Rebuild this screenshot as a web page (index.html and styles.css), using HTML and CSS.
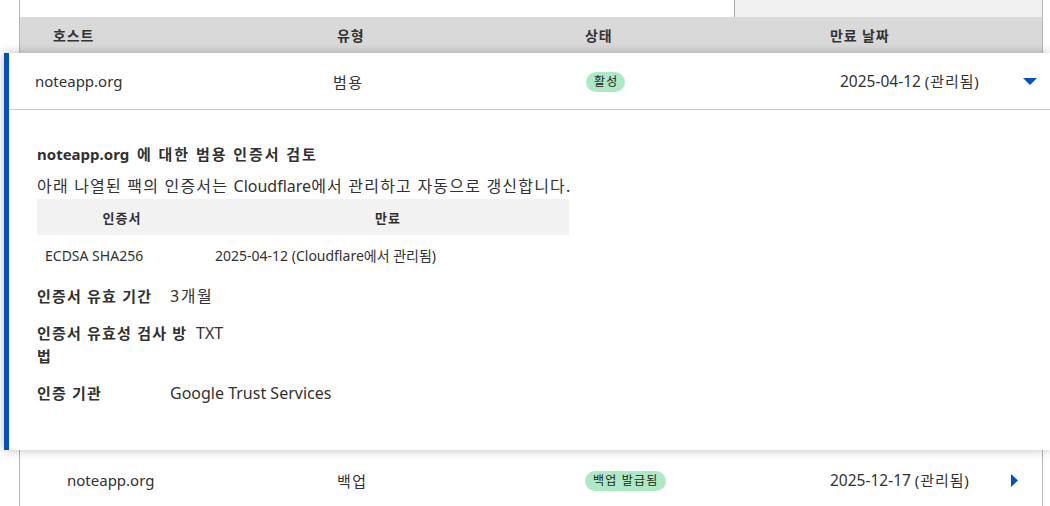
FILE: index.html
```html
<!DOCTYPE html>
<html lang="ko">
<head>
<meta charset="utf-8">
<link rel="stylesheet" href="styles.css">
</head>
<body>
<div class="list">
  <div class="toolbar">
    <div class="toolbar-space"></div>
    <div class="toolbar-tab"></div>
  </div>
  <div class="head grid">
    <div class="c1">호스트</div>
    <div class="c">유형</div>
    <div class="c">상태</div>
    <div class="c">만료 날짜</div>
    <div></div>
  </div>

  <div class="card">
    <div class="card-row">
      <div class="c1">noteapp.org</div>
      <div class="c ko">범용</div>
      <div class="c"><span class="badge">활성</span></div>
      <div class="c"><span class="date">2025-04-12</span> <span class="managed">(관리됨)</span></div>
      <div class="c5"><svg class="chev-down" width="14" height="7" viewBox="0 0 14 7"><path d="M0 0H14L7 7Z" fill="#0051c3"/></svg></div>
    </div>
    <div class="detail">
      <h3 class="detail-title">noteapp.org &nbsp;<span class="ko-b">에 대한 범용 인증서 검토</span></h3>
      <p class="detail-text"><span class="ko">아래 나열된 팩의 인증서는 </span>Cloudflare<span class="ko">에서 관리하고 자동으로 갱신합니다.</span></p>
      <table class="cert-table">
        <thead>
          <tr><th class="col-a">인증서</th><th>만료</th></tr>
        </thead>
        <tbody>
          <tr><td class="col-a">ECDSA SHA256</td><td>2025-04-12 (Cloudflare에서 관리됨)</td></tr>
        </tbody>
      </table>
      <dl class="props">
        <div class="prop"><dt>인증서 유효 기간</dt><dd class="ko">3개월</dd></div>
        <div class="prop"><dt class="dt-wide">인증서 유효성 검사 방법</dt><dd>TXT</dd></div>
        <div class="prop"><dt>인증 기관</dt><dd>Google Trust Services</dd></div>
      </dl>
    </div>
  </div>

  <div class="row grid">
    <div class="c1 c1-row">noteapp.org</div>
    <div class="c ko">백업</div>
    <div class="c"><span class="badge">백업 발급됨</span></div>
    <div class="c"><span class="date">2025-12-17</span> <span class="managed">(관리됨)</span></div>
    <div class="c5 c5-row"><svg width="7" height="13" viewBox="0 0 7 13"><path d="M0 0L7 6.5L0 13Z" fill="#0051c3"/></svg></div>
  </div>
</div>
</body>
</html>
```

FILE: styles.css
```css
* { box-sizing: border-box; }
html, body { margin: 0; padding: 0; background: #fff; }
body {
  font-family: "Noto Sans", "Noto Sans CJK KR", sans-serif;
  color: #313131;
  width: 1050px;
  height: 506px;
  overflow: hidden;
}
.ko { letter-spacing: 0.1em; }
.ko-b { letter-spacing: 0.13em; }
.managed { letter-spacing: 0.06em; }
.list {
  margin-left: 19px;
  width: 1024px;
  border-left: 1px solid #b6b6b6;
  border-right: 1px solid #b6b6b6;
  min-height: 506px;
}
.toolbar { display: flex; height: 17px; }
.toolbar-space { flex: 1; }
.toolbar-tab {
  width: 308px;
  background: #f1f1f1;
  border-left: 1px solid #a8a8a8;
}
.grid {
  display: grid;
  grid-template-columns: 301px 248px 245px 1fr 48px;
  align-items: center;
}
.head {
  height: 36px;
  background: #d9d9d9;
  font-size: 14px;
  font-weight: 700;
  color: #333;
  letter-spacing: 0.06em;
}
.c1 { padding-left: 33px; }
.c { padding-left: 16px; }
.c5 { display: flex; justify-content: flex-end; }
.date { font-size: 15.5px; }

.card {
  position: relative;
  z-index: 2;
  margin-left: -16px;
  margin-right: -8px;
  border-left: 5px solid #0051c3;
  background: #fff;
  box-shadow: 0 0 10px rgba(0, 0, 0, 0.26);
}
.card-row {
  display: grid;
  grid-template-columns: 308px 253px 254px 1fr 48px;
  align-items: center;
  height: 57px;
  border-bottom: 1px solid #c9c9c9;
  font-size: 15px;
}
.card-row .c1 { padding-left: 26px; }
.card-row .c5 { padding-right: 13px; }
.badge {
  display: inline-block;
  background: #aee9c5;
  color: #222;
  font-size: 12px;
  letter-spacing: 0.1em;
  line-height: 20px;
  height: 20px;
  padding: 0 7px 0 8px;
  border-radius: 10px;
  vertical-align: middle;
}
.detail {
  height: 340px;
  padding: 33px 0 0 28px;
}
.detail-title {
  margin: 0;
  font-size: 15px;
  line-height: 22px;
  font-weight: 700;
}
.detail-text {
  margin: 10px 0 0;
  font-size: 16px;
  line-height: 22px;
}
.detail-text .ko { letter-spacing: 0.075em; }
.cert-table {
  margin-top: 2px;
  width: 532px;
  border-collapse: collapse;
  font-size: 14px;
}
.cert-table th {
  background: #f2f2f2;
  height: 36px;
  font-size: 13px;
  font-weight: 700;
  text-align: center;
  padding: 0 8px;
  letter-spacing: 0.08em;
}
.cert-table td {
  height: 40px;
  padding: 0 8px;
  text-align: left;
}
.cert-table .col-a { width: 170px; }
.props { margin: 10px 0 0; }
.prop {
  display: flex;
  margin-bottom: 14px;
  font-size: 16px;
  line-height: 23px;
}
.prop dt {
  width: 133px;
  flex: none;
  font-weight: 700;
  font-size: 15px;
  letter-spacing: 0.08em;
}
.prop dt.dt-wide { width: 159px; }
.prop dd { margin: 0; }

.row {
  height: 60px;
  font-size: 15px;
}
.c1-row { padding-left: 47px; }
.c5-row { padding-right: 24px; }
```
